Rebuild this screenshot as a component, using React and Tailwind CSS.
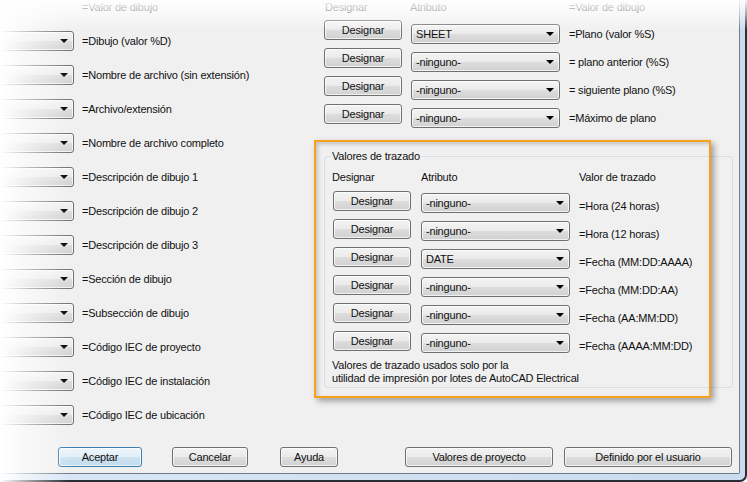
import React from "react";

// Windows 7 style "Propiedades de dibujo" dialog fragment
const btnBg =
  "bg-[linear-gradient(to_bottom,#f3f3f3_0%,#ebebeb_48%,#dddddd_52%,#d1d1d1_100%)]";

const leftRows = [
  "=Dibujo (valor %D)",
  "=Nombre de archivo (sin extensión)",
  "=Archivo/extensión",
  "=Nombre de archivo completo",
  "=Descripción de dibujo 1",
  "=Descripción de dibujo 2",
  "=Descripción de dibujo 3",
  "=Sección de dibujo",
  "=Subsección de dibujo",
  "=Código IEC de proyecto",
  "=Código IEC de instalación",
  "=Código IEC de ubicación",
];

const sheetRows = [
  ["SHEET", "=Plano (valor %S)"],
  ["-ninguno-", "= plano anterior (%S)"],
  ["-ninguno-", "= siguiente plano (%S)"],
  ["-ninguno-", "=Máximo de plano"],
];

const plotRows = [
  ["-ninguno-", "=Hora (24 horas)"],
  ["-ninguno-", "=Hora (12 horas)"],
  ["DATE", "=Fecha (MM:DD:AAAA)"],
  ["-ninguno-", "=Fecha (MM:DD:AA)"],
  ["-ninguno-", "=Fecha (AA:MM:DD)"],
  ["-ninguno-", "=Fecha (AAAA:MM:DD)"],
];

function Button({ children, className = "", focused = false }) {
  return (
    <div
      className={`flex items-center justify-center h-[20px] shrink-0 rounded-[3px] border leading-none shadow-[inset_0_0_0_1px_rgba(255,255,255,0.7)] ${
        focused
          ? "border-[#3c7fb1] bg-[linear-gradient(to_bottom,#eef6fc_0%,#e1eef8_48%,#cfe3f2_52%,#c1daec_100%)]"
          : `border-[#707070] ${btnBg}`
      } ${className}`}
    >
      {children}
    </div>
  );
}

function Combo({ value = "", className = "" }) {
  return (
    <div
      className={`flex items-center h-[20px] shrink-0 rounded-[3px] border border-[#707070] pl-[4px] leading-none shadow-[inset_0_0_0_1px_rgba(255,255,255,0.7)] ${btnBg} ${className}`}
    >
      <span>{value}</span>
      <span className="ml-auto mr-[5px] w-0 h-0 border-l-[4px] border-r-[4px] border-t-[4px] border-l-transparent border-r-transparent border-t-black" />
    </div>
  );
}

export default function App() {
  return (
    <div className="relative w-[747px] h-[482px] overflow-hidden font-['Liberation_Sans',Arial,sans-serif] text-[11px] tracking-[-0.2px] text-[#111] bg-white">
      <div className="w-full h-full pr-[5px] pb-[6px] border-r-2 border-b-2 border-[#2a2f35] rounded-br-[7px] bg-[linear-gradient(to_right,#dbe7f5,#c9dbef)]">
        <div className="relative w-[740px] h-[474px] border-r border-b border-[#6c7a89] rounded-br-[2px] bg-[#f0f0f0] flex flex-col">
          <div className="flex h-[447px]">
            {/* left column */}
            <div className="w-[315px] flex flex-col">
              <div className="h-[24px] pl-[82px] pt-px leading-[13px]">=Valor de dibujo</div>
              {leftRows.map((label) => (
                <div key={label} className="h-[34px] flex items-center">
                  <Combo className="w-[80px] -ml-[6px]" />
                  <span className="ml-[8px] leading-[13px]">{label}</span>
                </div>
              ))}
            </div>

            {/* right column */}
            <div className="flex-1 pl-[9px] flex flex-col">
              <div className="h-[20px] flex pt-px leading-[13px]">
                <span className="w-[86px] pl-px">Designar</span>
                <span className="w-[159px]">Atributo</span>
                <span>=Valor de dibujo</span>
              </div>
              {sheetRows.map(([value, label]) => (
                <div key={label} className="h-[28px] flex items-start">
                  <Button className="w-[78px]">Designar</Button>
                  <Combo value={value} className="w-[149px] ml-[9px] mt-[4px]" />
                  <span className="ml-[9px] mt-[8px] leading-[13px]">{label}</span>
                </div>
              ))}

              <div className="relative mt-[24px] w-[409px] h-[232px] border border-[#d5dfe5] rounded-[3px] pl-[7px] pt-[14px]">
                <span className="absolute -top-[7px] left-[6px] px-px bg-[#f0f0f0] leading-[13px]">
                  Valores de trazado
                </span>
                <div className="flex leading-[13px]">
                  <span className="w-[89px]">Designar</span>
                  <span className="w-[158px]">Atributo</span>
                  <span>Valor de trazado</span>
                </div>
                <div className="mt-[7px] flex flex-col">
                  {plotRows.map(([value, label]) => (
                    <div key={label} className="h-[28px] flex items-start">
                      <Button className="w-[78px] ml-px">Designar</Button>
                      <Combo value={value} className="w-[149px] ml-[10px] mt-[2px]" />
                      <span className="ml-[9px] mt-[9px] leading-[13px]">{label}</span>
                    </div>
                  ))}
                </div>
                <p className="leading-[13px]">
                  Valores de trazado usados solo por la
                  <br />
                  utilidad de impresión por lotes de AutoCAD Electrical
                </p>
              </div>
            </div>
          </div>

          {/* bottom buttons */}
          <div className="flex h-[20px]">
            <Button focused className="w-[84px] ml-[58px]">Aceptar</Button>
            <Button className="w-[76px] ml-[30px]">Cancelar</Button>
            <Button className="w-[58px] ml-[32px]">Ayuda</Button>
            <Button className="w-[148px] ml-[67px]">Valores de proyecto</Button>
            <Button className="w-[168px] ml-[11px]">Definido por el usuario</Button>
          </div>

          {/* orange highlight callout */}
          <div className="pointer-events-none absolute left-[314px] top-[140px] w-[397px] h-[258px] border-2 border-[#f7a11c] shadow-[3px_3px_6px_rgba(0,0,0,0.35),inset_2px_2px_4px_rgba(0,0,0,0.2)]" />
        </div>
      </div>

      {/* screenshot edge fades */}
      <div className="pointer-events-none absolute inset-y-0 left-0 w-[70px] bg-linear-to-r from-white via-white/45 to-transparent" />
      <div className="pointer-events-none absolute inset-x-0 top-0 h-[30px] bg-linear-to-b from-white/95 via-white/55 to-transparent" />
    </div>
  );
}
